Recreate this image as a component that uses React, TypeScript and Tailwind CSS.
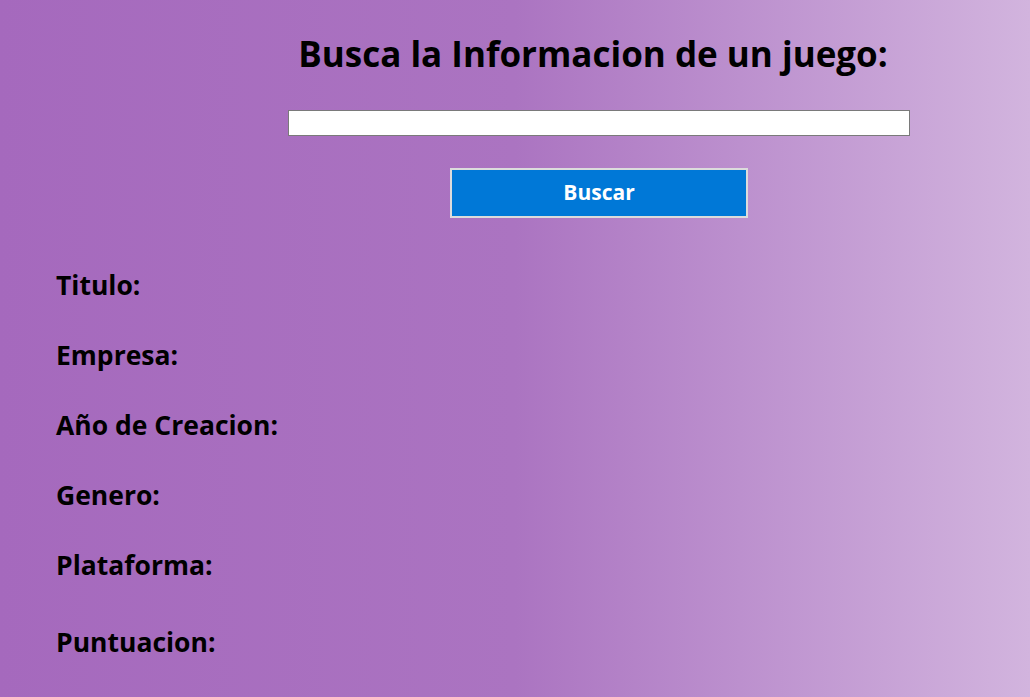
import React from 'react';

const fields = ['Titulo:', 'Empresa:', 'Año de Creacion:', 'Genero:', 'Plataforma:'];

const App: React.FC = () => {
  return (
    <div
      className="min-h-screen w-full bg-gradient-to-r from-[#a569bd] via-[#ab74c1] to-[#d2b4de] text-black"
      style={{ fontFamily: '"Open Sans", "Noto Sans", sans-serif' }}
    >
      {/* search */}
      <div className="ml-[288px] flex w-[622px] flex-col items-center pt-[30px]">
        <h1 className="-ml-[12px] text-[35px] font-bold leading-[48px]">Busca la Informacion de un juego:</h1>
        <input type="text" className="mt-[32px] h-[26px] w-full border border-[#7a7a7a] bg-white outline-none" />
        <button className="mt-[32px] h-[50px] w-[298px] border-2 border-[#dcdcdc] bg-[#0078d7] text-[21px] font-bold text-white">
          Buscar
        </button>
      </div>

      {/* results */}
      <div className="mt-[32px] flex flex-col pl-[56px]">
        {fields.map((f) => (
          <div key={f} className="h-[70px] text-[26.5px] font-bold leading-[70px]">
            {f}
          </div>
        ))}
        <div className="mt-[7px] h-[70px] text-[26.5px] font-bold leading-[70px]">Puntuacion:</div>
      </div>
    </div>
  );
};

export default App;
